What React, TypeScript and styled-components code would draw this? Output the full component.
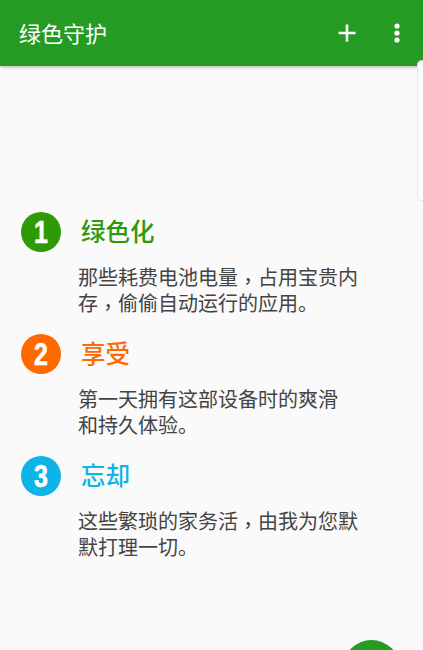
import { createGlobalStyle, styled } from 'styled-components';

const sections = [
  { id: 1, title: '绿色化', color: '#2f9a07', lines: [['那些耗费电池电量', '占用宝贵内'], ['存', '偷偷自动运行的应用。']] },
  { id: 2, title: '享受', color: '#ff6a00', lines: [['第一天拥有这部设备时的爽滑'], ['和持久体验。']] },
  { id: 3, title: '忘却', color: '#0db4e6', lines: [['这些繁琐的家务活', '由我为您默'], ['默打理一切。']] },
];

const App = () => (
  <Screen>
    <GlobalStyle />
    <AppBar>
      <Title>绿色守护</Title>
      <Actions>
        <svg width="18" height="18" viewBox="0 0 18 18">
          <path d="M9 0.5v17M0.5 9h17" stroke="#fff" strokeWidth="2.6" />
        </svg>
        <svg width="6" height="20" viewBox="0 0 6 20">
          <circle cx="3" cy="3" r="2.6" fill="#fff" />
          <circle cx="3" cy="10" r="2.6" fill="#fff" />
          <circle cx="3" cy="17" r="2.6" fill="#fff" />
        </svg>
      </Actions>
    </AppBar>
    <EdgeHandle />
    <Content>
      {sections.map(section => (
        <Section key={section.id}>
          <SectionHead>
            <Badge $color={section.color}>
              <BadgeNumber>{section.id}</BadgeNumber>
            </Badge>
            <SectionTitle $color={section.color}>{section.title}</SectionTitle>
          </SectionHead>
          <Body>
            {section.lines.map(parts => (
              <BodyLine key={parts[0]}>
                {parts.map((part, index) => (
                  <span key={part}>
                    {index > 0 && <Comma>，</Comma>}
                    {part}
                  </span>
                ))}
              </BodyLine>
            ))}
          </Body>
        </Section>
      ))}
    </Content>
    <Fab />
  </Screen>
);

export default App;

const GlobalStyle = createGlobalStyle`
  html, body {
    margin: 0;
    padding: 0;
    background: #fafafa;
  }
`;

const Screen = styled.div`
  position: relative;
  width: 423px;
  height: 650px;
  overflow: hidden;
  background: #fafafa;
  font-family: 'Noto Sans CJK SC', 'Roboto', sans-serif;
`;

const AppBar = styled.header`
  display: flex;
  align-items: center;
  justify-content: space-between;
  box-sizing: border-box;
  height: 66px;
  padding: 0 23px 0 19px;
  background: #259b24;
  box-shadow: 0 1px 3px rgba(0, 0, 0, 0.3);
`;

const Title = styled.h1`
  margin: 0 0 2px;
  font-size: 22px;
  font-weight: 400;
  color: #fff;
`;

const Actions = styled.div`
  display: flex;
  gap: 38px;
  align-items: center;
`;

const EdgeHandle = styled.div`
  position: absolute;
  top: 60px;
  right: -8px;
  width: 12px;
  height: 139px;
  border: 1px solid #e4e4e4;
  border-top-color: #c4dcc4;
  border-radius: 5px;
  background: #fbfbfb;
`;

const Content = styled.main`
  display: flex;
  flex-direction: column;
  gap: 18px;
  padding: 146px 0 0 21px;
`;

const Section = styled.section`
  display: flex;
  flex-direction: column;
  gap: 12px;
`;

const SectionHead = styled.div`
  display: flex;
  align-items: center;
  gap: 20px;
`;

const Badge = styled.div<{ $color: string }>`
  display: flex;
  align-items: center;
  justify-content: center;
  width: 40px;
  height: 40px;
  border-radius: 50%;
  background: ${({ $color }) => $color};
`;

const BadgeNumber = styled.span`
  display: inline-block;
  font-family: 'Liberation Sans', sans-serif;
  font-size: 32px;
  font-weight: 700;
  line-height: 1;
  color: #fff;
  transform: scaleX(0.78);
  -webkit-text-stroke: 0.6px #fff;
`;

const SectionTitle = styled.h2<{ $color: string }>`
  margin: 0 0 3px;
  font-size: 24.5px;
  font-weight: 500;
  line-height: 34px;
  color: ${({ $color }) => $color};
`;

const Body = styled.div`
  margin-left: 57px;
  font-size: 20px;
  line-height: 26px;
  color: #444;
`;

const BodyLine = styled.div`
  white-space: nowrap;
`;

const Comma = styled.span`
  display: inline-block;
  font-family: 'Noto Sans CJK TC', sans-serif;
  transform: translateY(4px);
`;

const Fab = styled.div`
  position: absolute;
  top: 640px;
  left: 343px;
  width: 57px;
  height: 57px;
  border-radius: 50%;
  background: #259b24;
`;
